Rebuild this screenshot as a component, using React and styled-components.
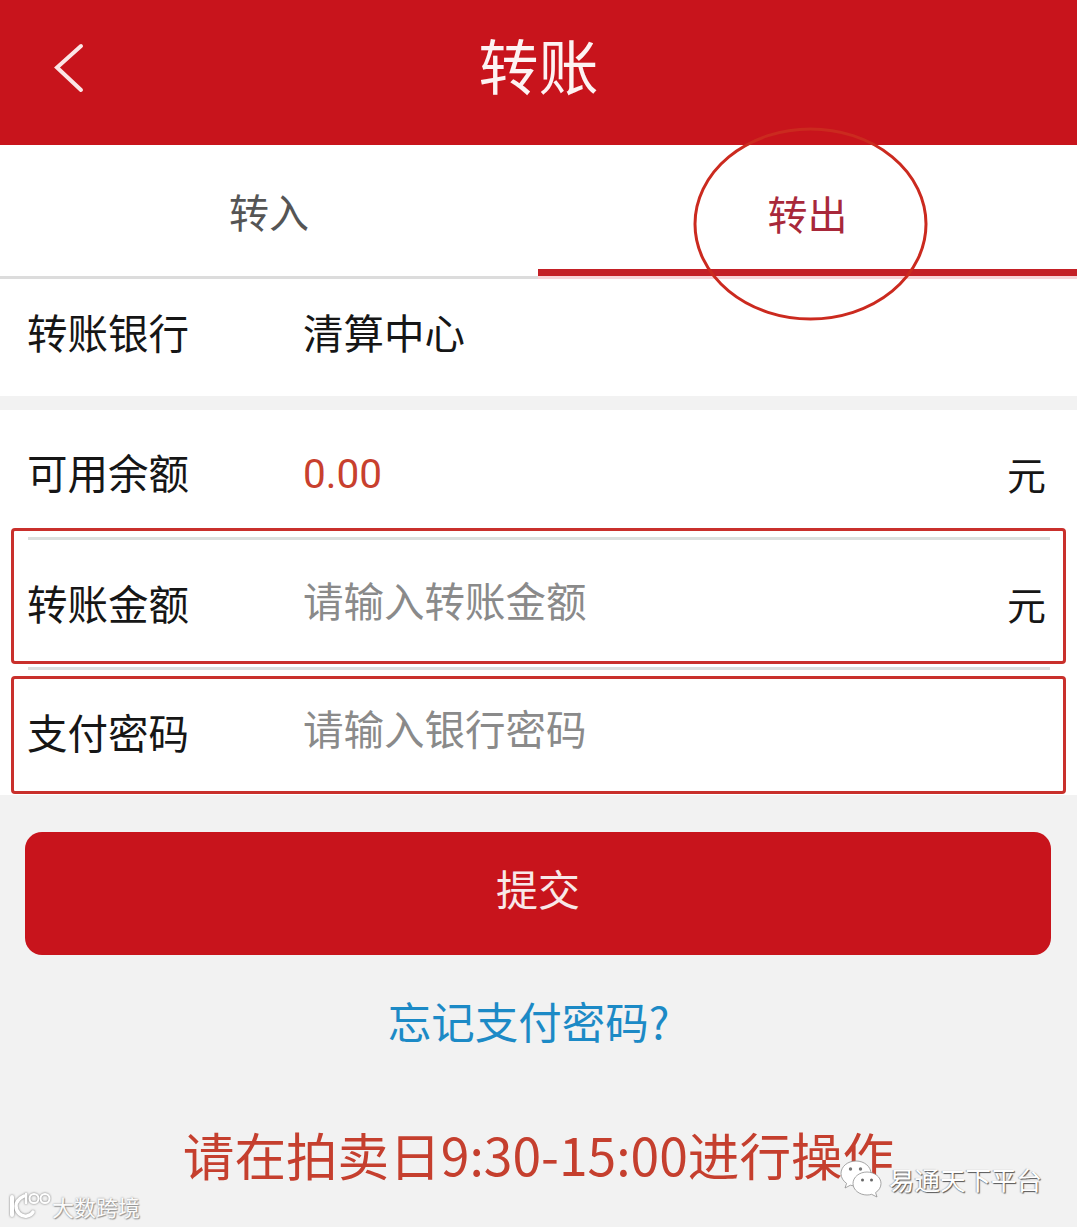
import React from "react";
import styled, { createGlobalStyle } from "styled-components";

const Global = createGlobalStyle`
  html, body { margin: 0; padding: 0; background: #f2f2f2; }
  body { font-family: "Noto Sans CJK SC", "Liberation Sans", sans-serif; }
`;

const Page = styled.div`
  position: relative;
  width: 1077px;
  height: 1227px;
  overflow: hidden;
  background: #f2f2f2;
  display: flex;
  flex-direction: column;
`;

const Header = styled.header`
  flex: none;
  height: 145px;
  background: #c8141c;
  display: flex;
  align-items: center;
  justify-content: center;
  position: relative;
`;

const BackButton = styled.button`
  position: absolute;
  left: 52px;
  top: 42px;
  width: 34px;
  height: 52px;
  padding: 0;
  border: 0;
  background: none;
  display: block;
`;

const Title = styled.h1`
  margin: 0;
  font-size: 60px;
  font-weight: 400;
  line-height: 1;
  color: #fdf3f3;
  transform: translateY(-9px);
`;

const Tabs = styled.nav`
  flex: none;
  height: 134px;
  background: #fff;
  display: grid;
  grid-template-columns: 538px 539px;
`;

const Tab = styled.div`
  display: flex;
  align-items: center;
  justify-content: center;
  font-size: 40px;
  line-height: 1;
  box-sizing: border-box;
  padding-top: ${(p) => (p.$active ? "4px" : "0")};
  color: ${(p) => (p.$active ? "#a8283a" : "#555")};
  border-bottom: 3px solid ${(p) => (p.$active ? "#f8d4d8" : "#dcdcdc")};
  box-shadow: ${(p) => (p.$active ? "inset 0 -7px 0 #c42026" : "none")};
`;

const BankPanel = styled.section`
  flex: none;
  background: #fff;
  height: 117px;
  margin-bottom: 14px;
  display: flex;
`;

const FormPanel = styled.section`
  flex: none;
  background: #fff;
  padding: 0 27px 0 28px;
  height: 385px;
  box-sizing: border-box;
`;

const BankRow = styled.div`
  flex: 1;
  padding: 0 28px;
  display: flex;
  align-items: center;
  transform: translateY(-5px);
`;

const Row = styled.div`
  display: flex;
  align-items: center;
  height: ${(p) => p.$height}px;
  box-sizing: border-box;
  border-bottom: ${(p) => (p.$divider ? "3px solid #dbdfde" : "0")};
`;

const Label = styled.span`
  flex: none;
  width: 276px;
  margin-left: -1px;
  margin-right: 1px;
  font-size: 40.5px;
  line-height: 1;
  color: #161616;
  transform: translateY(${(p) => p.$shift || 0}px);
`;

const Value = styled.span`
  flex: 1;
  margin-left: -1px;
  font-size: 40.5px;
  line-height: 1;
  color: ${(p) => p.$color || "#161616"};
  font-family: ${(p) => (p.$numeric ? '"Roboto", "Liberation Sans", sans-serif' : "inherit")};
  transform: translateY(${(p) => p.$shift || 0}px);
`;

const Unit = styled.span`
  flex: none;
  font-size: 39px;
  line-height: 1;
  color: #161616;
  margin-right: 4px;
  transform: translateY(${(p) => p.$shift || 0}px);
`;

const Actions = styled.div`
  flex: none;
  padding: 37px 26px 0 25px;
`;

const SubmitButton = styled.button`
  display: flex;
  align-items: center;
  justify-content: center;
  width: 100%;
  height: 123px;
  border: 0;
  border-radius: 17px;
  background: #c8141c;
  color: #f8e8e8;
  font-family: inherit;
  font-size: 42px;
  line-height: 1;
  padding: 0 0 11px;
`;

const ForgotLink = styled.a`
  display: block;
  margin-top: 40px;
  padding-right: 19px;
  text-align: center;
  font-size: 43.5px;
  line-height: 52px;
  color: #1c8ac6;
`;

const Notice = styled.p`
  margin: 77px 0 0;
  text-align: center;
  font-size: 51.6px;
  line-height: 60px;
  color: #c53f2e;
  white-space: nowrap;
`;

/* Hand-drawn annotations laid over the form */
const Circle = styled.svg`
  position: absolute;
  left: 690px;
  top: 124px;
  width: 242px;
  height: 200px;
  pointer-events: none;
`;

const Marker = styled.div`
  position: absolute;
  left: 11px;
  width: 1055px;
  top: ${(p) => p.$top}px;
  height: ${(p) => p.$height}px;
  box-sizing: border-box;
  border: 3px solid #c9302c;
  border-radius: 4px;
  pointer-events: none;
`;

const Stamp = styled.div`
  position: absolute;
  display: flex;
  align-items: center;
  left: ${(p) => p.$left}px;
  top: ${(p) => p.$top}px;
  gap: ${(p) => p.$gap}px;
`;

const StampText = styled.span`
  font-size: ${(p) => p.$size}px;
  line-height: 1;
  white-space: nowrap;
  color: #fff;
  text-shadow: 1px 1px 1px #555, -1px 0 1px rgba(120, 120, 120, 0.55);
`;

const FadedStampText = styled(StampText)`
  color: #fbfbfb;
  text-shadow: 0 0 2px #8a8a8a, 1px 1px 1px #999;
`;

function BackIcon() {
  return (
    <svg width="34" height="52" viewBox="0 0 34 52" fill="none">
      <path d="M29 4 L5 25.5 L29 48" stroke="#fbe6e6" strokeWidth="4" strokeLinecap="round" strokeLinejoin="miter" />
    </svg>
  );
}

function ChatBubbles() {
  return (
    <svg width="42" height="38" viewBox="0 0 42 38">
      <g stroke="#8f8f8f" strokeWidth="0.8" fill="#fff">
        <path d="M16 1C7.5 1 1 6.6 1 13.6c0 4 2.2 7.4 5.6 9.8L5 28l5.4-2.8c1.8.5 3.6.8 5.6.8 8.5 0 15-5.6 15-12.4S24.5 1 16 1Z" />
        <path d="M27 12c-7.7 0-14 5.2-14 11.5S19.3 35 27 35c1.6 0 3.2-.2 4.6-.7L37 37l-1.4-4.4c3.4-2.2 5.4-5.4 5.4-9.1C41 17.200 34.700 12 27 12Z" />
      </g>
      <circle cx="10.500" cy="9" r="1.700" fill="#777" />
      <circle cx="20.500" cy="9" r="1.700" fill="#777" />
      <circle cx="22.500" cy="20" r="1.500" fill="#666" />
      <circle cx="31.500" cy="20" r="1.500" fill="#666" />
    </svg>
  );
}

function BrandMark() {
  return (
    <svg width="44" height="30" viewBox="0 0 44 30" fill="none" stroke="#fff">
      <g style={{ filter: "drop-shadow(0 0 1px #777)" }}>
        <path d="M4 6v18" strokeWidth="4" strokeLinecap="round" />
        <path d="M16 5c-6 3-8 7-8 10 0 6 5 11 11 10 3-.5 5-2 6-4" strokeWidth="3.500" strokeLinecap="round" />
        <path d="M18 3v9" strokeWidth="2.500" strokeLinecap="round" />
        <circle cx="26" cy="7.500" r="4.500" strokeWidth="2" />
        <circle cx="37" cy="7.500" r="4.500" strokeWidth="2" />
      </g>
    </svg>
  );
}

export default function App() {
  return (
    <Page>
      <Global />
      <Header>
        <BackButton aria-label="返回">
          <BackIcon />
        </BackButton>
        <Title>转账</Title>
      </Header>

      <Tabs>
        <Tab>转入</Tab>
        <Tab $active>转出</Tab>
      </Tabs>

      <BankPanel>
        <BankRow>
          <Label>转账银行</Label>
          <Value>清算中心</Value>
        </BankRow>
      </BankPanel>

      <FormPanel>
        <Row $height={129.500} $divider>
          <Label $shift={-1}>可用余额</Label>
          <Value $numeric $color="#c8402e" $shift={1}>0.00</Value>
          <Unit $shift={0}>元</Unit>
        </Row>
        <Row $height={130} $divider>
          <Label $shift={0}>转账金额</Label>
          <Value $color="#8a8a8a" $shift={-3}>请输入转账金额</Value>
          <Unit $shift={0}>元</Unit>
        </Row>
        <Row $height={125.500}>
          <Label $shift={0}>支付密码</Label>
          <Value $color="#8a8a8a" $shift={-4}>请输入银行密码</Value>
        </Row>
      </FormPanel>

      <Actions>
        <SubmitButton>提交</SubmitButton>
        <ForgotLink>忘记支付密码?</ForgotLink>
      </Actions>

      <Notice>请在拍卖日9:30-15:00进行操作</Notice>

      <Circle viewBox="0 0 242 200" fill="none">
        <ellipse cx="120.500" cy="100" rx="115.500" ry="95" stroke="#cb2a1f" strokeWidth="3" />
      </Circle>
      <Marker $top={528} $height={136} />
      <Marker $top={676} $height={118} />

      <Stamp $left={8} $top={1191} $gap={0}>
        <BrandMark />
        <FadedStampText $size={22}>大数跨境</FadedStampText>
      </Stamp>
      <Stamp $left={840} $top={1160} $gap={7}>
        <ChatBubbles />
        <StampText $size={25.500}>易通天下平台</StampText>
      </Stamp>
    </Page>
  );
}
